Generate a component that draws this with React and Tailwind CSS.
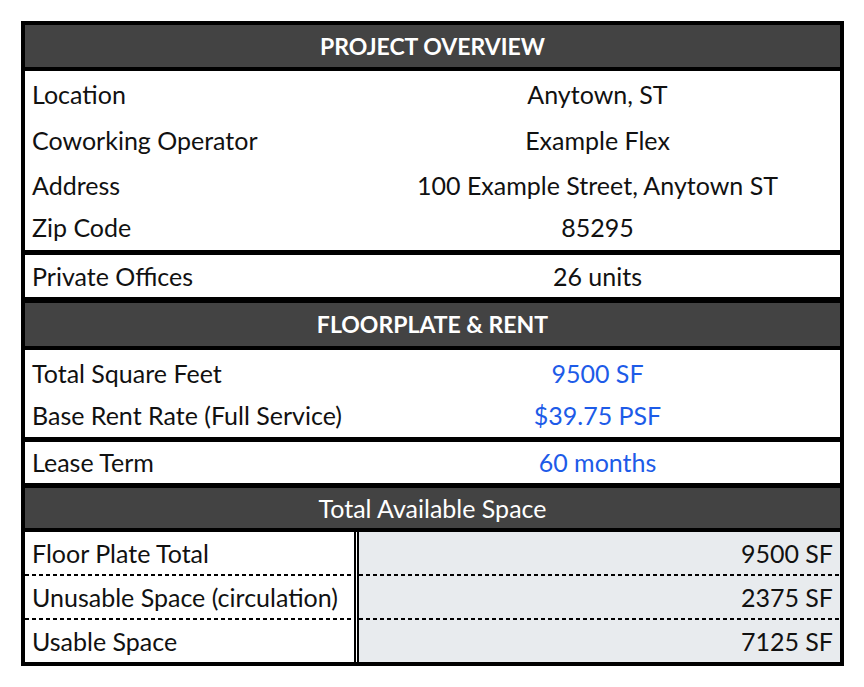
import React from "react";

const blue = "text-[#1d5be8]";

function Header({ children, bold = true, h }) {
  return (
    <div
      className={`${h} bg-[#434343] text-white flex items-center justify-center ${
        bold ? "font-bold text-[23px]" : ""
      }`}
    >
      {children}
    </div>
  );
}

function Row({ label, value, h, valueClass = "" }) {
  return (
    <div className={`flex items-center ${h}`}>
      <div className="w-[330px] pl-[7px]">{label}</div>
      <div className={`flex-1 text-center ${valueClass}`}>{value}</div>
    </div>
  );
}

function Dash() {
  return (
    <div className="h-[2px] bg-[repeating-linear-gradient(to_right,#000_0_4px,transparent_4px_7px)]" />
  );
}

function SpaceRow({ label, value, last }) {
  return (
    <>
      <div className="flex h-[42px]">
        <div className="w-[329px] pl-[7px] flex items-center bg-white">{label}</div>
        <div className="w-[5px] border-l-[5px] border-double border-black" />
        <div className="flex-1 bg-[#e8ebee] flex items-center justify-end pr-[7px]">
          {value}
        </div>
      </div>
      {!last && (
        <div className="flex">
          <div className="w-[329px]">
            <Dash />
          </div>
          <div className="w-[5px] border-l-[5px] border-double border-black" />
          <div className="flex-1 bg-[#e8ebee]">
            <Dash />
          </div>
        </div>
      )}
    </>
  );
}

export default function App() {
  return (
    <div className="bg-white min-h-[687px] pt-[21px] pl-[21px] text-[25px] leading-none text-[#111] font-['Lato',sans-serif]">
      <div className="w-[823px] border-4 border-black">
        <Header h="h-[42px]">PROJECT OVERVIEW</Header>

        <div className="border-t-4 border-black">
          <Row label="Location" value="Anytown, ST" h="h-[46px]" />
          <Row label="Coworking Operator" value="Example Flex" h="h-[46px]" />
          <Row label="Address" value="100 Example Street, Anytown ST" h="h-[45px]" />
          <Row label="Zip Code" value="85295" h="h-[42px] pb-[3px]" />
        </div>

        <div className="border-t-[5px] border-black">
          <Row label="Private Offices" value="26 units" h="h-[42px]" />
        </div>

        <div className="border-t-[6px] border-black">
          <Header h="h-[43px]">FLOORPLATE &amp; RENT</Header>
        </div>

        <div className="border-t-4 border-black">
          <Row label="Total Square Feet" value="9500 SF" h="h-[46px]" valueClass={blue} />
          <Row
            label="Base Rent Rate (Full Service)"
            value="$39.75 PSF"
            h="h-[41px] pb-[3px]"
            valueClass={blue}
          />
        </div>

        <div className="border-t-[5px] border-black">
          <Row label="Lease Term" value="60 months" h="h-[41px]" valueClass={blue} />
        </div>

        <div className="border-t-[5px] border-black">
          <Header h="h-[40px]" bold={false}>
            Total Available Space
          </Header>
        </div>

        <div className="border-t-4 border-black">
          <SpaceRow label="Floor Plate Total" value="9500 SF" />
          <SpaceRow label="Unusable Space (circulation)" value="2375 SF" />
          <SpaceRow label="Usable Space" value="7125 SF" last />
        </div>
      </div>
    </div>
  );
}
